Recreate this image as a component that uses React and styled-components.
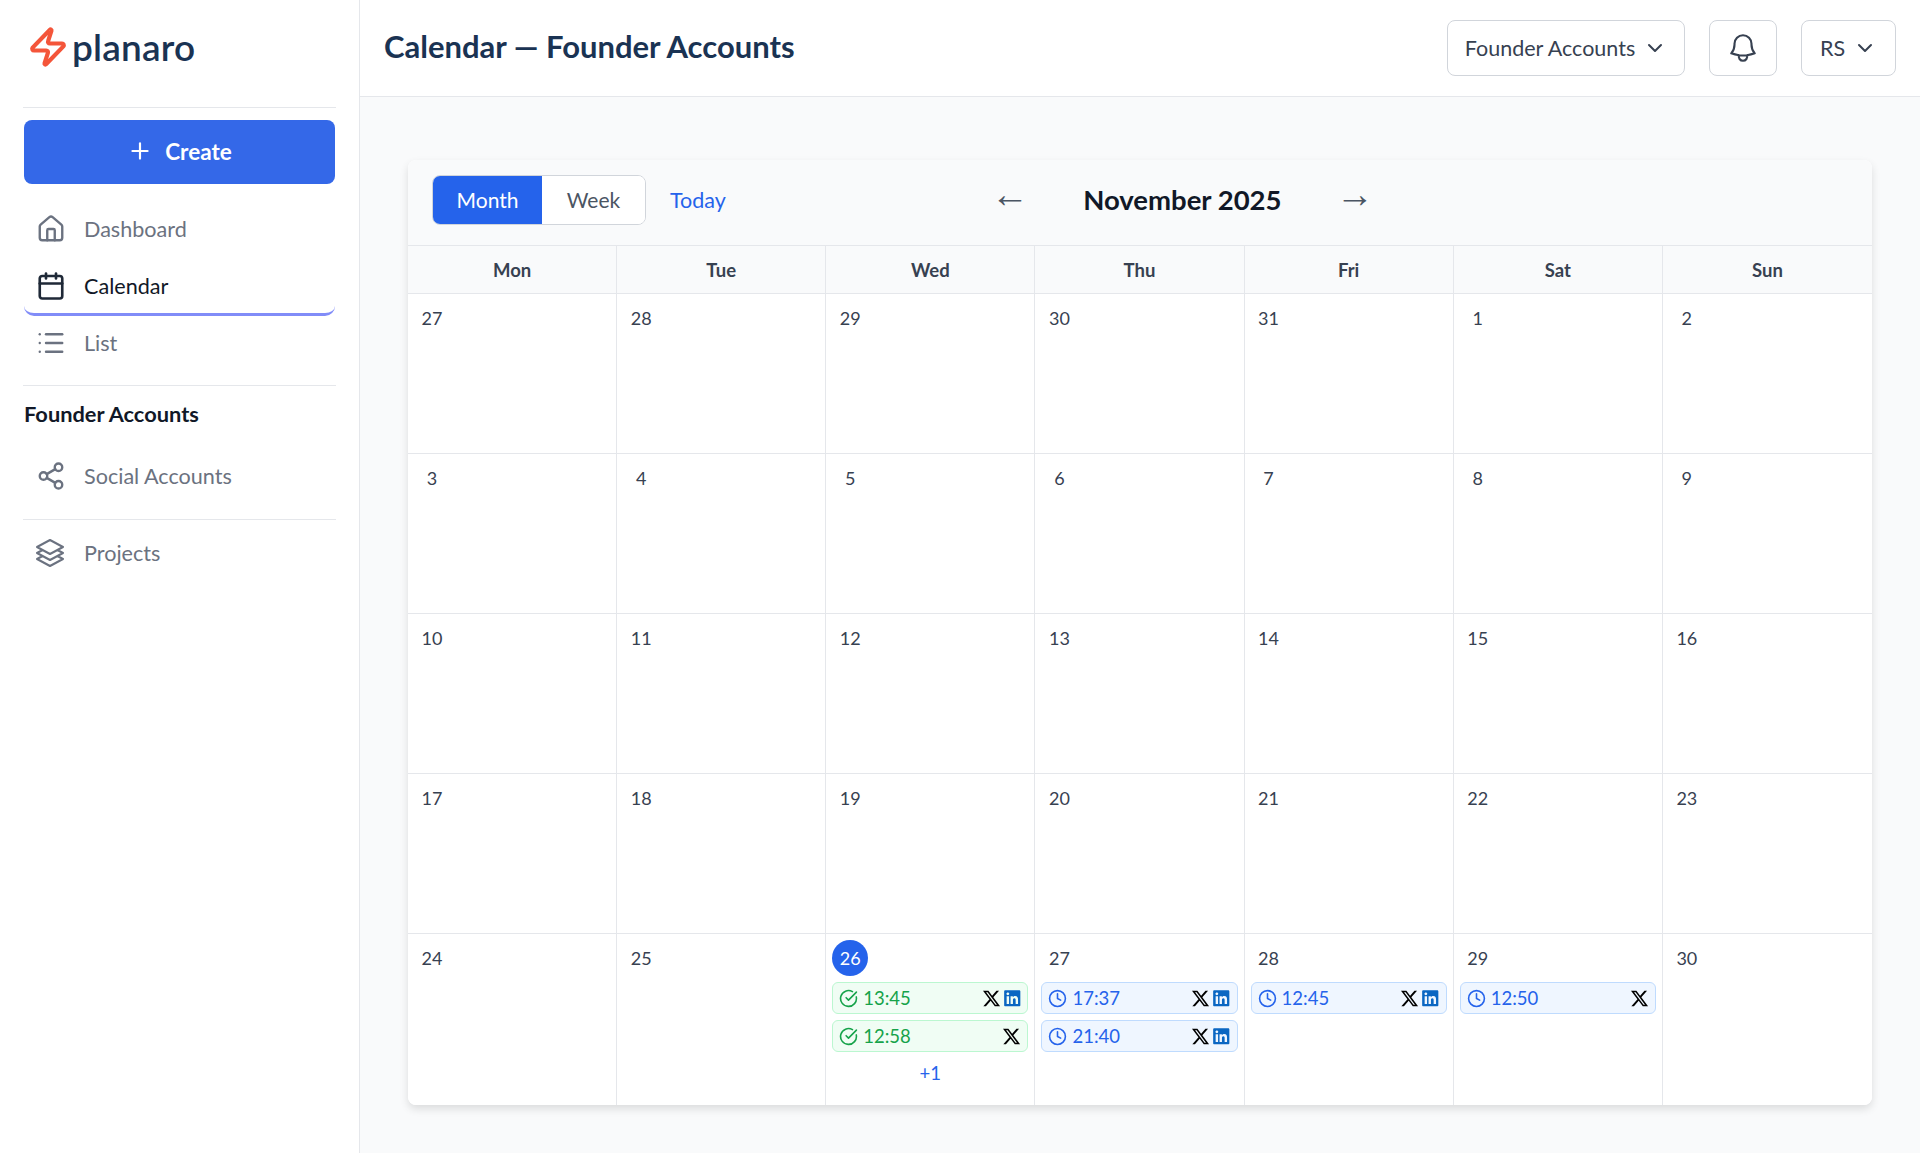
import styled, { createGlobalStyle } from 'styled-components';
import { House, Calendar, List, Share2, Plus, ChevronDown, CircleCheckBig, Clock, Zap } from 'lucide-react';
import { HiOutlineBell, HiOutlineSquare3Stack3D } from 'react-icons/hi2';
import { FaXTwitter, FaLinkedin } from 'react-icons/fa6';

const GlobalStyle = createGlobalStyle`
  * { box-sizing: border-box; }
  body {
    margin: 0;
    background: #f9fafb;
    font-family: 'Lato', 'Noto Sans', sans-serif;
    color: #374151;
  }
`;

const Page = styled.div`
  display: flex;
  min-height: 1153px;
`;
const Sidebar = styled.aside`
  width: 360px;
  flex-shrink: 0;
  background: #fff;
  border-right: 1px solid #e5e7eb;
  padding: 0 24px;
`;
const Logo = styled.div`
  display: flex;
  align-items: center;
  height: 107px;
  padding: 0 0 14px 3px;
  gap: 3px;
  color: #1a3353;
  font-size: 37px;
  font-weight: 600;
  letter-spacing: 0.2px;
  svg { color: #f4553a; }
`;
const Divider = styled.div`
  height: 1px;
  margin: 0 -1px;
  background: #e5e7eb;
`;
const CreateButton = styled.button`
  display: flex;
  align-items: center;
  justify-content: center;
  gap: 12px;
  width: 100%;
  height: 64px;
  margin: 12px 0 18px;
  padding: 0 0 2px;
  border: 0;
  border-radius: 8px;
  background: #3468e8;
  color: #fff;
  font: inherit;
  font-size: 22.5px;
  font-weight: 700;
`;
const NavList = styled.nav`
  display: flex;
  flex-direction: column;
  padding-bottom: 12px;
`;
const NavItem = styled.a`
  display: flex;
  align-items: center;
  gap: 18px;
  height: 57px;
  padding-left: ${(p) => p.$inset || 12}px;
  font-size: 21.6px;
  color: ${(p) => (p.$active ? '#111827' : '#6b7280')};
  border-bottom: 3px solid ${(p) => (p.$active ? '#818cf8' : 'transparent')};
  border-radius: 0 0 10px 10px;
`;
const SectionTitle = styled.div`
  padding: 15px 0 22px;
  font-size: 21.8px;
  font-weight: 700;
  line-height: 26px;
  color: #111827;
`;
const Group = styled.div`
  padding-top: ${(p) => p.$top || 0}px;
  padding-bottom: ${(p) => p.$bottom || 0}px;
`;
const Main = styled.main`
  flex: 1;
  min-width: 0;
`;
const Header = styled.header`
  display: flex;
  align-items: center;
  height: 97px;
  padding: 0 24px;
  background: #fff;
  border-bottom: 1px solid #e5e7eb;
`;
const Title = styled.h1`
  flex: 1;
  margin: 0 0 4px;
  font-size: 31px;
  font-weight: 700;
  color: #1a3353;
`;
const HeaderButton = styled.button`
  display: flex;
  align-items: center;
  justify-content: center;
  gap: 8px;
  height: 56px;
  width: ${(p) => p.$width}px;
  margin-left: 24px;
  background: #fff;
  border: 1px solid #d1d5db;
  border-radius: 8px;
  font: inherit;
  font-size: 21.5px;
  color: #374151;
`;
const Content = styled.div`
  padding: 63px 48px 48px;
`;
const Card = styled.section`
  border-radius: 8px;
  overflow: hidden;
  background: #fff;
  box-shadow: 0 4px 8px rgba(0, 0, 0, 0.12);
`;
const Toolbar = styled.div`
  display: flex;
  align-items: center;
  height: 86px;
  padding: 0 24px 6px;
  background: #f9fafb;
  border-bottom: 1px solid #e5e7eb;
`;
const Segment = styled.div`
  display: flex;
  width: 214px;
  height: 50px;
  border: 1px solid #d1d5db;
  border-radius: 8px;
  overflow: hidden;
  background: #fff;
`;
const SegmentButton = styled.div`
  display: flex;
  align-items: center;
  justify-content: center;
  flex: ${(p) => (p.$active ? '0 0 109px' : 1)};
  font-size: 21px;
  background: ${(p) => (p.$active ? '#2563eb' : '#fff')};
  color: ${(p) => (p.$active ? '#fff' : '#4b5563')};
`;
const TodayLink = styled.a`
  margin-left: 24px;
  font-size: 21.5px;
  color: #2563eb;
`;
const MonthNav = styled.div`
  display: flex;
  align-items: center;
  justify-content: space-between;
  width: 383px;
  margin-left: 265px;
`;
const Arrow = styled.span`
  margin-bottom: 12px;
  font-family: 'Liberation Sans', sans-serif;
  font-size: 38px;
  line-height: 1;
  color: #4b5563;
`;
const MonthTitle = styled.h2`
  margin: 0;
  font-size: 27.5px;
  font-weight: 700;
  color: #111827;
`;
const Grid = styled.div`
  display: grid;
  grid-template-columns: repeat(7, 1fr);
`;
const WeekDay = styled.div`
  display: flex;
  align-items: center;
  justify-content: center;
  height: 48px;
  background: #f9fafb;
  border-right: 1px solid #e5e7eb;
  border-bottom: 1px solid #e5e7eb;
  font-size: 18.5px;
  font-weight: 700;
  &:nth-child(7n) { border-right: 0; }
`;
const Cell = styled.div`
  display: flex;
  flex-direction: column;
  gap: 6px;
  min-height: 160px;
  padding: 6px 6px 0;
  background: #fff;
  border-right: 1px solid #e5e7eb;
  border-bottom: 1px solid #e5e7eb;
  &:nth-child(7n) { border-right: 0; }
  &:nth-last-child(-n + 7) { border-bottom: 0; min-height: 171px; }
`;
const DayNumber = styled.div`
  display: flex;
  align-items: center;
  justify-content: center;
  width: 36px;
  height: 36px;
  border-radius: 50%;
  font-size: 18px;
  background: ${(p) => (p.$today ? '#2563eb' : 'transparent')};
  color: ${(p) => (p.$today ? '#fff' : '#374151')};
`;
const Chip = styled.div`
  display: flex;
  align-items: center;
  height: 32px;
  padding: 0 6px;
  border-radius: 6px;
  font-size: 18.5px;
  border: 1px solid ${(p) => (p.$done ? '#bbf7d0' : '#bfdbfe')};
  background: ${(p) => (p.$done ? '#f0fdf4' : '#eff6ff')};
  color: ${(p) => (p.$done ? '#16a34a' : '#2563eb')};
`;
const ChipTime = styled.span`
  flex: 1;
  margin-left: 5px;
`;
const ChipIcons = styled.span`
  display: flex;
  align-items: center;
  gap: 2px;
`;
const MoreLink = styled.div`
  line-height: 30px;
  text-align: center;
  font-size: 18.5px;
  color: #2563eb;
`;

const weekDays = ['Mon', 'Tue', 'Wed', 'Thu', 'Fri', 'Sat', 'Sun'];
const days = [27, 28, 29, 30, 31, ...Array.from({ length: 30 }, (_, i) => i + 1)];
const events = {
  26: { done: true, more: 1, items: [['13:45', true], ['12:58', false]] },
  27: { items: [['17:37', true], ['21:40', true]] },
  28: { items: [['12:45', true]] },
  29: { items: [['12:50', false]] },
};

function EventChip({ time, linkedin, done }) {
  const StatusIcon = done ? CircleCheckBig : Clock;
  return (
    <Chip $done={done}>
      <StatusIcon size={19} strokeWidth={2} />
      <ChipTime>{time}</ChipTime>
      <ChipIcons>
        <FaXTwitter size={19} color="#000" />
        {linkedin && <FaLinkedin size={18.5} color="#0a66c2" />}
      </ChipIcons>
    </Chip>
  );
}

export default function App() {
  return (
    <Page>
      <GlobalStyle />
      <Sidebar>
        <Logo>
          <Zap size={42} strokeWidth={2.4} />
          planaro
        </Logo>
        <Divider />
        <CreateButton>
          <Plus size={26} />
          Create
        </CreateButton>
        <NavList>
          <NavItem><House size={30} strokeWidth={1.9} />Dashboard</NavItem>
          <NavItem $active><Calendar size={30} strokeWidth={2.1} color="#1f2937" />Calendar</NavItem>
          <NavItem><List size={30} strokeWidth={1.9} />List</NavItem>
        </NavList>
        <Divider />
        <SectionTitle>Founder Accounts</SectionTitle>
        <Group $bottom={13}>
          <NavItem><Share2 size={30} strokeWidth={1.9} />Social Accounts</NavItem>
        </Group>
        <Divider />
        <Group $top={6}>
          <NavItem $inset={10}><HiOutlineSquare3Stack3D size={32} />Projects</NavItem>
        </Group>
      </Sidebar>
      <Main>
        <Header>
          <Title>Calendar — Founder Accounts</Title>
          <HeaderButton $width={238}>Founder Accounts <ChevronDown size={24} /></HeaderButton>
          <HeaderButton $width={68}><HiOutlineBell size={34} /></HeaderButton>
          <HeaderButton $width={95}>RS <ChevronDown size={24} /></HeaderButton>
        </Header>
        <Content>
          <Card>
            <Toolbar>
              <Segment>
                <SegmentButton $active>Month</SegmentButton>
                <SegmentButton>Week</SegmentButton>
              </Segment>
              <TodayLink>Today</TodayLink>
              <MonthNav>
                <Arrow>←</Arrow>
                <MonthTitle>November 2025</MonthTitle>
                <Arrow>→</Arrow>
              </MonthNav>
            </Toolbar>
            <Grid>
              {weekDays.map((d) => <WeekDay key={d}>{d}</WeekDay>)}
            </Grid>
            <Grid>
              {days.map((d, i) => {
                const ev = i > 4 ? events[d] : null;
                return (
                  <Cell key={i}>
                    <DayNumber $today={i > 4 && d === 26}>{d}</DayNumber>
                    {ev && ev.items.map(([time, linkedin]) => (
                      <EventChip key={time} time={time} linkedin={linkedin} done={ev.done} />
                    ))}
                    {ev && ev.more && <MoreLink>+{ev.more}</MoreLink>}
                  </Cell>
                );
              })}
            </Grid>
          </Card>
        </Content>
      </Main>
    </Page>
  );
}
